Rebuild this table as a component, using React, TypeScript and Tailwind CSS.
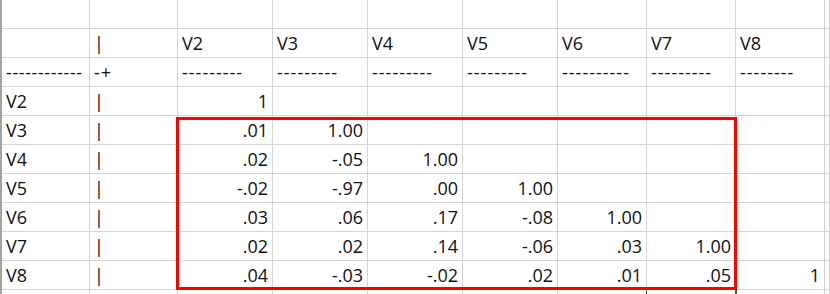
const colW = [
  'w-[88px]',
  'w-[88px]',
  'w-[95px]',
  'w-[95px]',
  'w-[95px]',
  'w-[95px]',
  'w-[89px]',
  'w-[89px]',
  'w-[89px]',
  'flex-1',
];

const rows: string[][] = [
  ['', '', '', '', '', '', '', '', '', ''],
  ['', '|', 'V2', 'V3', 'V4', 'V5', 'V6', 'V7', 'V8', ''],
  ['------------', '-+', '---------', '---------', '---------', '---------', '----------', '---------', '--------', ''],
  ['V2', '|', '1', '', '', '', '', '', '', ''],
  ['V3', '|', '.01', '1.00', '', '', '', '', '', ''],
  ['V4', '|', '.02', '-.05', '1.00', '', '', '', '', ''],
  ['V5', '|', '-.02', '-.97', '.00', '1.00', '', '', '', ''],
  ['V6', '|', '.03', '.06', '.17', '-.08', '1.00', '', '', ''],
  ['V7', '|', '.02', '.02', '.14', '-.06', '.03', '1.00', '', ''],
  ['V8', '|', '.04', '-.03', '-.02', '.02', '.01', '.05', '1', ''],
  ['', '', '', '', '', '', '', '', '', ''],
];

const isNumber = (s: string) => /^-?\d*\.?\d+$/.test(s);
const isDashes = (s: string) => /^-+\+?$/.test(s);

const Cell = ({ value, width, first }: { value: string; width: string; first: boolean }) => {
  const numeric = isNumber(value);
  const dashes = isDashes(value);
  return (
    <div
      className={`${width} h-[29px] shrink-0 border-r border-b border-[#d4d4d4] flex items-center overflow-hidden whitespace-nowrap ${
        numeric ? 'justify-end pr-[4px]' : 'justify-start pl-[4px]'
      }`}
    >
      <span className={dashes ? (first ? 'tracking-[0.6px]' : 'tracking-[1px]') : ''}>{value}</span>
    </div>
  );
};

export default function App() {
  return (
    <div className="relative w-[830px] h-[294px] overflow-hidden bg-white border-l-2 border-[#a3a3a3] font-['Open_Sans',sans-serif] text-[18px] leading-none text-[#111]">
      {rows.map((row, r) => (
        <div key={r} className="flex">
          {row.map((value, c) => (
            <Cell key={c} value={value} width={colW[c]} first={c === 0} />
          ))}
        </div>
      ))}

      {/* highlighted block */}
      <div className="absolute left-[174px] top-[117px] w-[561px] h-[173px] border-[3px] border-[#ff0000]" />

      {/* selection marks at the bottom edge */}
      <div className="absolute left-[-2px] top-[288px] w-[2px] h-[6px] bg-[#217346]" />
      <div className="absolute left-[644px] top-[290px] w-[1px] h-[4px] bg-[#217346]" />
      <div className="absolute left-[733px] top-[290px] w-[2px] h-[4px] bg-[#217346]" />
    </div>
  );
}
